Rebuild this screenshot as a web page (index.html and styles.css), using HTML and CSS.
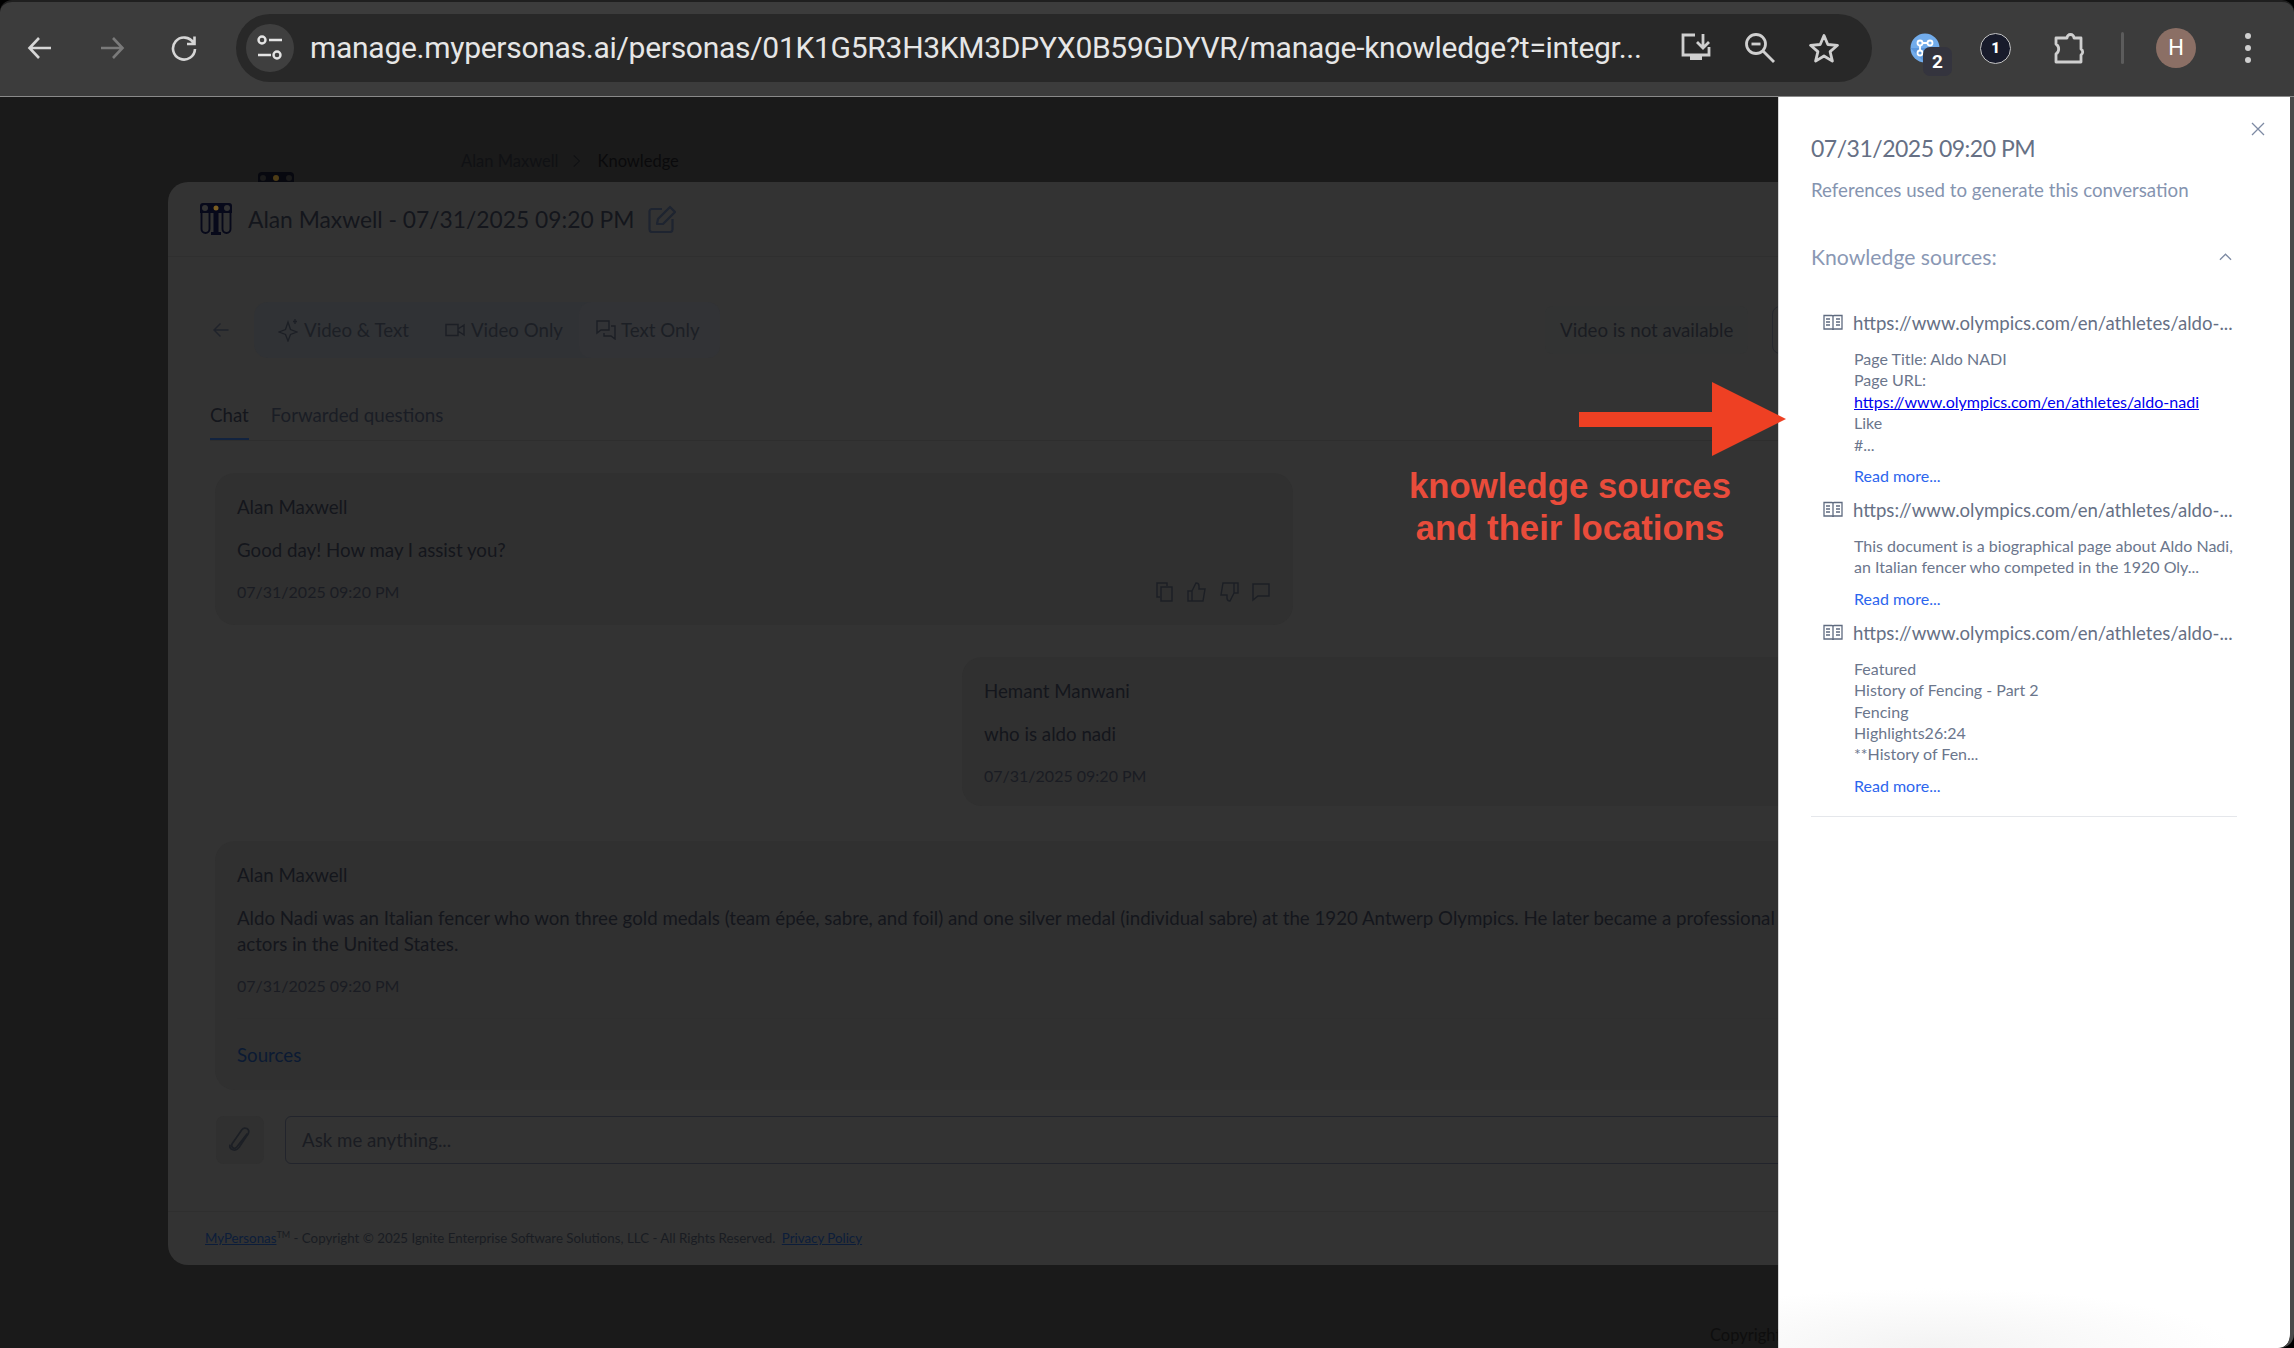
FILE: index.html
```html
<!DOCTYPE html>
<html lang="en">
<head>
<meta charset="utf-8">
<title>Knowledge sources</title>
<link rel="stylesheet" href="styles.css">
</head>
<body>
<div class="window">
  <header class="toolbar">
    <div class="nav">
      <svg class="ic" viewBox="0 0 28 28"><path d="M25 14H4M13 4 3.500 14 13 24" fill="none" stroke="#d6d6d6" stroke-width="2.600"/></svg>
      <svg class="ic" viewBox="0 0 28 28"><path d="M3 14h21M15 4l9.500 10L15 24" fill="none" stroke="#7a7a7a" stroke-width="2.600"/></svg>
      <svg class="ic" viewBox="0 0 28 28"><path d="M23.500 9A11 11 0 1 0 25 15M24.500 2.500v7.500h-7.500" fill="none" stroke="#d6d6d6" stroke-width="2.600"/></svg>
    </div>
    <div class="omnibox">
      <span class="tune">
        <svg viewBox="0 0 30 30" width="30" height="30"><g fill="none" stroke="#e3e3e3" stroke-width="2.400"><circle cx="7" cy="7" r="3.500"/><circle cx="22" cy="22" r="3.500"/><path d="M14 7h13M3 22h13"/></g></svg>
      </span>
      <span class="url">manage.mypersonas.ai/personas/01K1G5R3H3KM3DPYX0B59GDYVR/manage-knowledge?t=integr...</span>
      <span class="omni-icons">
        <svg class="ic-m" viewBox="0 0 32 32"><g fill="none" stroke="#cfcfcf" stroke-width="2.800"><path d="M15 3H3v20h26v-8"/><path d="M23 2v13M17 10l6 6 6-6"/></g><path d="M10 23h12v5H10z" fill="#cfcfcf"/></svg>
        <svg class="ic-m" viewBox="0 0 32 32"><g fill="none" stroke="#cfcfcf" stroke-width="2.800"><circle cx="12" cy="12" r="9.500"/><path d="M19 19l11 11"/><path d="M7.500 12h9"/></g></svg>
        <svg class="ic-m" viewBox="0 0 32 32"><path d="M16 3.500l3.800 9 9.700.8-7.400 6.300 2.300 9.500-8.400-5.100-8.400 5.100 2.300-9.500-7.400-6.300 9.700-.8z" fill="none" stroke="#cfcfcf" stroke-width="2.800" stroke-linejoin="round"/></svg>
      </span>
    </div>
    <div class="extensions">
      <span class="ext-a">
        <svg viewBox="0 0 30 30" width="30" height="30"><circle cx="15" cy="15" r="14.500" fill="#72aceb"/><path d="M.5 15l14.500 15 14.500-15z" fill="#5c97dc"/><g fill="none" stroke="#fff" stroke-width="1.800"><circle cx="10" cy="10" r="2.500"/><circle cx="20" cy="10" r="2.500"/><circle cx="10" cy="20" r="2.500"/><path d="M12.500 10h5M10 12.500v5"/></g></svg>
        <b class="ext-badge">2</b>
      </span>
      <span class="ext-b"><b>1</b></span>
      <svg class="ext-c" viewBox="0 0 32 32"><path d="M2 6h11a3.500 3.500 0 0 1 7 0h7v11a3.500 3.500 0 0 1 0 6v7H2v-8a6 6 0 0 0 0-10z" fill="none" stroke="#cfcfcf" stroke-width="2.800" stroke-linejoin="round"/></svg>
      <i class="ext-sep"></i>
      <span class="avatar">H</span>
      <span class="kebab"><i></i><i></i><i></i></span>
    </div>
  </header>

  <main class="stage">
    <div class="behind">
      <span>Alan Maxwell</span><svg viewBox="0 0 10 16" width="8" height="14"><path d="M1 1l7 7-7 7" fill="none" stroke="#0f1013" stroke-width="1.300"/></svg><span class="crumb-now">Knowledge</span>
    </div>
    <svg class="behind-logo" viewBox="0 0 36 10"><path d="M0 10V4a4 4 0 0 1 4-4h28a4 4 0 0 1 4 4v6z" fill="#07080f"/><circle cx="5" cy="6" r="3" fill="#1a1a1a"/><circle cx="18" cy="6" r="3" fill="#4d3c16"/><circle cx="31" cy="6" r="3" fill="#1a1a1a"/></svg>

    <section class="card">
      <div class="card-head">
        <svg class="logo" viewBox="0 0 32 32"><path d="M0 3a3 3 0 0 1 3-3h26a3 3 0 0 1 3 3v7H0z" fill="#07091a"/><circle cx="5" cy="5" r="3" fill="#333"/><circle cx="27" cy="5" r="3" fill="#333"/><circle cx="16" cy="5" r="2.500" fill="#7a5d22"/><g fill="none" stroke="#07091a" stroke-width="1.900"><path d="M1.500 8v18a4 4 0 0 0 8 0V10M30.500 8v18a4 4 0 0 1-8 0V10"/></g><path d="M13.500 9h5v20h-5zM11 29h10v3H11z" fill="#07091a"/></svg>
        <h1>Alan Maxwell - 07/31/2025 09:20 PM</h1>
        <svg class="edit" viewBox="0 0 28 28"><path d="M14 4H4a2.500 2.500 0 0 0-2.500 2.500v18A2.500 2.500 0 0 0 4 27h18a2.500 2.500 0 0 0 2.500-2.500V14" fill="none" stroke="#1e2430" stroke-width="2.200"/><path d="M9 19l1-5L22 2l5 5-12 12z" fill="none" stroke="#1e2430" stroke-width="2.200" stroke-linejoin="round"/></svg>
      </div>

      <div class="mode-row">
        <svg class="mode-back" viewBox="0 0 16 16"><path d="M15.500 8H1M7.500 1.500 1 8l6.500 6.500" fill="none" stroke="#1f232b" stroke-width="1.400"/></svg>
        <div class="modes">
          <span class="mode">
            <svg viewBox="0 0 20 24" width="20" height="24"><path d="M10 4l2.500 7.500L19 14l-6.500 2.500L10 23l-2.500-6.500L1 14l6.500-2.500zM17 1v5M15 3.500h4" fill="none" stroke="#1c1f25" stroke-width="1.300"/></svg>
            Video &amp; Text
          </span>
          <span class="mode">
            <svg viewBox="0 0 20 16" width="20" height="16"><path d="M1 2.500h12v11H1zM13 7l6-4v10l-6-4" fill="none" stroke="#1c1f25" stroke-width="1.400"/></svg>
            Video Only
          </span>
          <span class="mode mode-on">
            <svg viewBox="0 0 20 20" width="20" height="20"><path d="M1 1h12v9H5l-4 3zM15 6h4v13l-4-3H8v-3" fill="none" stroke="#1c1f25" stroke-width="1.400"/></svg>
            Text Only
          </span>
        </div>
        <span class="no-video">Video is not available</span>
        <span class="mode-box"></span>
      </div>

      <nav class="tabs">
        <a class="tab tab-on">Chat</a>
        <a class="tab">Forwarded questions</a>
      </nav>

      <div class="chat">
        <article class="bubble bubble-a">
          <p class="who">Alan Maxwell</p>
          <p class="msg">Good day! How may I assist you?</p>
          <div class="meta">
            <span class="stamp">07/31/2025 09:20 PM</span>
            <span class="tools">
              <svg viewBox="0 0 20 20" width="20" height="20"><path d="M5 15H2V1h10v3M6 5h11v14H6z" fill="none" stroke="#1c1f25" stroke-width="1.400"/></svg>
              <svg viewBox="0 0 20 20" width="20" height="20"><path d="M1 9h4v10H1zM5 9l4-8c2 0 3 1 3 3v3h6l-2 12H5" fill="none" stroke="#1c1f25" stroke-width="1.400"/></svg>
              <svg viewBox="0 0 20 20" width="20" height="20"><path d="M15 11h4V1h-4zM15 11l-4 8c-2 0-3-1-3-3v-3H2L4 1h11" fill="none" stroke="#1c1f25" stroke-width="1.400"/></svg>
              <svg viewBox="0 0 20 20" width="20" height="20"><path d="M2 2h16v12H7l-5 4z" fill="none" stroke="#1c1f25" stroke-width="1.400"/></svg>
            </span>
          </div>
        </article>

        <article class="bubble bubble-b">
          <p class="who">Hemant Manwani</p>
          <p class="msg">who is aldo nadi</p>
          <span class="stamp">07/31/2025 09:20 PM</span>
        </article>

        <article class="bubble bubble-c">
          <p class="who">Alan Maxwell</p>
          <p class="msg">Aldo Nadi was an Italian fencer who won three gold medals (team épée, sabre, and foil) and one silver medal (individual sabre) at the 1920 Antwerp Olympics. He later became a professional fencing master and taught fencing to actors in the United States.</p>
          <span class="stamp">07/31/2025 09:20 PM</span>
          <hr class="rule">
          <a class="sources">Sources</a>
        </article>
      </div>

      <div class="ask">
        <span class="attach"><svg viewBox="0 0 26 32" width="24" height="30"><path d="M21 9 9.500 23.500c-2.500 3-7 .5-5-3.500L15 5c3-4 9-1 7 4L12 24c-3.500 5-11 3-10-3" fill="none" stroke="#1c1f25" stroke-width="1.800"/></svg></span>
        <span class="ask-input">Ask me anything...</span>
      </div>

      <footer class="foot">
        <a>MyPersonas</a><sup>TM</sup> - Copyright © 2025 Ignite Enterprise Software Solutions, LLC - All Rights Reserved. <a class="policy">Privacy Policy</a>
      </footer>
    </section>

    <div class="under-copy">Copyright ©</div>

    <aside class="drawer">
      <svg class="close" viewBox="0 0 14 14"><path d="M1 1l12 12M13 1 1 13" fill="none" stroke="#7d8aa3" stroke-width="1.300"/></svg>
      <h2>07/31/2025 09:20 PM</h2>
      <p class="drawer-sub">References used to generate this conversation</p>
      <div class="ks-head">
        <span>Knowledge sources:</span>
        <svg viewBox="0 0 14 8" width="13" height="8"><path d="M1 7l6-6 6 6" fill="none" stroke="#7d8aa3" stroke-width="1.400"/></svg>
      </div>

      <div class="source">
        <div class="src-title">
          <svg class="book" viewBox="0 0 20 18"><g fill="none" stroke="#5f6b80" stroke-width="1.300"><path d="M1 1.500h8c.7 0 1 .5 1 1V16c0-.6-.4-1-1-1H1zM19 1.500h-8c-.7 0-1 .5-1 1V16c0-.6.4-1 1-1h8z"/><path d="M3 5h4M3 8h4M3 11h4M13 5h4M13 8h4M13 11h4"/></g></svg>
          <span>https://www.olympics.com/en/athletes/aldo-...</span>
        </div>
        <div class="src-body">Page Title: Aldo NADI<br>Page URL:<br><a class="src-link">https://www.olympics.com/en/athletes/aldo-nadi</a><br>Like<br>#...</div>
        <a class="more">Read more...</a>
      </div>

      <div class="source">
        <div class="src-title">
          <svg class="book" viewBox="0 0 20 18"><g fill="none" stroke="#5f6b80" stroke-width="1.300"><path d="M1 1.500h8c.7 0 1 .5 1 1V16c0-.6-.4-1-1-1H1zM19 1.500h-8c-.7 0-1 .5-1 1V16c0-.6.4-1 1-1h8z"/><path d="M3 5h4M3 8h4M3 11h4M13 5h4M13 8h4M13 11h4"/></g></svg>
          <span>https://www.olympics.com/en/athletes/aldo-...</span>
        </div>
        <div class="src-body">This document is a biographical page about Aldo Nadi, an Italian fencer who competed in the 1920 Oly...</div>
        <a class="more">Read more...</a>
      </div>

      <div class="source">
        <div class="src-title">
          <svg class="book" viewBox="0 0 20 18"><g fill="none" stroke="#5f6b80" stroke-width="1.300"><path d="M1 1.500h8c.7 0 1 .5 1 1V16c0-.6-.4-1-1-1H1zM19 1.500h-8c-.7 0-1 .5-1 1V16c0-.6.4-1 1-1h8z"/><path d="M3 5h4M3 8h4M3 11h4M13 5h4M13 8h4M13 11h4"/></g></svg>
          <span>https://www.olympics.com/en/athletes/aldo-...</span>
        </div>
        <div class="src-body">Featured<br>History of Fencing - Part 2<br>Fencing<br>Highlights26:24<br>**History of Fen...</div>
        <a class="more">Read more...</a>
      </div>

      <hr class="drawer-rule">
    </aside>

    <svg class="arrow" viewBox="0 0 207 74"><path d="M0 30h133V0l74 37-74 37V45H0z" fill="#ee4023"/></svg>
    <div class="note">knowledge sources<br>and their locations</div>
  </main>
</div>
</body>
</html>
```

FILE: styles.css
```css
* { box-sizing: border-box; }
html, body { margin: 0; height: 100%; overflow: hidden; background: #000; }
body { font-family: Lato, "Noto Sans", sans-serif; }
p, h1, h2 { margin: 0; font-weight: 400; }

.window { height: 1348px; display: flex; flex-direction: column; }

/* Browser chrome */
.toolbar {
  flex: none; height: 97px; padding-bottom: 2px; display: flex; align-items: center;
  background: #3c3c3c; border-bottom: 1px solid #8a8a8a;
  border-top: 2px solid #1f1f1f; border-radius: 12px 12px 0 0;
}
.nav { display: flex; gap: 44px; padding-left: 26px; width: 236px; flex: none; }
.ic { width: 28px; height: 28px; display: block; }
.omnibox {
  width: 1636px; height: 68px; flex: none; display: flex; align-items: center;
  background: #282828; border-radius: 34px; padding-left: 10px;
}
.tune {
  width: 48px; height: 48px; border-radius: 50%; background: #3f3f3f;
  display: flex; align-items: center; justify-content: center; flex: none;
}
.url {
  margin-left: 16px; width: 1334px; font: 30px/40px Roboto, sans-serif; letter-spacing: -.28px; color: #e6e6e6;
  white-space: nowrap; flex: none;
}
.omni-icons { display: flex; gap: 32px; margin-left: 36px; align-items: center; }
.ic-m { width: 32px; height: 32px; display: block; }
.extensions { display: flex; align-items: center; flex: 1; padding-left: 38px; position: relative; height: 68px; }
.ext-a { position: relative; width: 30px; height: 30px; display: block; margin-right: 40px; }
.ext-badge {
  position: absolute; left: 13px; top: 14px; width: 29px; height: 29px; border-radius: 7px;
  background: #34343e; color: #fff; font: 700 19px/29px Roboto, sans-serif; text-align: center;
}
.ext-b {
  width: 31px; height: 31px; border-radius: 50%; background: #181b2b; border: 1.500px solid #c4c4c4;
  color: #fff; font: 700 15px/28px Roboto, sans-serif; text-align: center; margin-right: 43px; flex: none;
}
.ext-c { width: 32px; height: 32px; flex: none; margin-right: 35px; }
.ext-sep { width: 3px; height: 32px; background: #5c5c5c; border-radius: 2px; flex: none; margin-right: 32px; }
.avatar {
  width: 40px; height: 40px; border-radius: 50%; background: #8b6f65; color: #fff;
  font: 22px/40px Roboto, sans-serif; text-align: center; flex: none; margin-right: 49px;
}
.kebab { display: flex; flex-direction: column; gap: 6px; }
.kebab i { width: 6px; height: 6px; border-radius: 50%; background: #cfcfcf; display: block; }

/* Dimmed page */
.stage {
  position: relative; flex: 1; overflow: hidden; padding: 85px 0 0 168px; background: #1a1a1a;
  border-right: 4px solid #4a4a4a; border-radius: 0 0 14px 0;
}
.behind {
  position: absolute; left: 461px; top: 52px; display: flex; align-items: center; gap: 14px;
  font-size: 16.500px; line-height: 24px; color: #101114;
}
.crumb-now { color: #0a0a0c; margin-left: 3px; }
.behind-logo { position: absolute; left: 258px; top: 75px; width: 36px; height: 10px; }
.card {
  width: 1958px; height: 1083px; background: #333; border-radius: 20px;
  display: flex; flex-direction: column; overflow: hidden; position: relative;
}
.card-head {
  height: 75px; flex: none; display: flex; align-items: center; padding-left: 32px;
  border-bottom: 1px solid #2f2f2f;
}
.logo { width: 32px; height: 32px; flex: none; }
.card-head h1 { font-size: 22.800px; color: #14161c; margin-left: 16px; white-space: nowrap; }
.edit { width: 28px; height: 28px; margin-left: 14px; flex: none; }
.mode-row { height: 64px; margin-top: 41px; display: flex; align-items: center; padding-left: 45px; flex: none; }
.mode-back { width: 16px; height: 16px; flex: none; }
.modes {
  display: flex; align-items: center; height: 56px; width: 466px; margin-left: 25px;
  background: #303235; border-radius: 14px; padding-left: 24px; flex: none;
}
.mode { display: flex; align-items: center; gap: 6px; font-size: 18.700px; color: #1c1f25; margin-right: 36px; white-space: nowrap; }
.mode-on { background: #323336; margin: 0 0 0 -20px; padding: 0 20px 0 17px; height: 56px; border-radius: 12px; gap: 5px; }
.no-video {
  margin-left: 825px; padding: 0 15px; height: 48px; line-height: 48px; background: #323333; border-radius: 8px;
  font-size: 18.700px; color: #1a1c22; white-space: nowrap; flex: none;
}
.mode-box { width: 80px; height: 48px; border: 1px solid #26282e; border-radius: 8px; margin-left: 24px; flex: none; }

.tabs {
  display: flex; gap: 22px; height: 49px; margin: 30px 0 0 42px; align-items: flex-start;
  border-bottom: 1px solid #2e2e2e; flex: none; font-size: 18.700px;
}
.tab { color: #1a1d25; height: 48px; line-height: 47px; }
.tab-on { color: #14161c; border-bottom: 2px solid #12233f; }

.chat { display: flex; flex-direction: column; padding: 32px 0 0 47px; flex: none; }
.bubble { background: #303030; border-radius: 20px; padding: 21px 22px 0; }
.who, .msg { font-size: 18.700px; line-height: 26px; color: #14161c; }
.msg { margin-top: 17px; }
.stamp { display: block; font-size: 16px; line-height: 24px; color: #1a1c23; margin-top: 17px; }
.bubble-a { width: 1078px; height: 152px; }
.meta { display: flex; justify-content: space-between; align-items: center; }
.tools { display: flex; gap: 12px; margin-top: 17px; }
.bubble-b { width: 1100px; height: 149px; margin: 32px 0 0 747px; }
.bubble-c { width: 1900px; height: 249px; margin-top: 35px; }
.rule { border: 0; border-top: 1px solid #2f2f2f; margin: 20px 0 0; }
.sources { display: block; font-size: 18.700px; line-height: 26px; color: #0b1a33; margin-top: 23px; }

.ask { display: flex; align-items: stretch; gap: 21px; padding: 26px 0 0 48px; flex: none; height: 74px; }
.attach {
  width: 48px; height: 48px; background: #303030; border-radius: 8px; flex: none;
  display: flex; align-items: center; justify-content: center;
}
.ask-input {
  width: 1800px; height: 48px; border: 1.500px solid #22242c; border-radius: 6px;
  padding-left: 16px; font-size: 18.700px; line-height: 46px; color: #1a1c22;
}
.foot {
  margin-top: auto; height: 54px; border-top: 1px solid #2f2f2f; padding-left: 37px;
  font-size: 13.300px; line-height: 52px; color: #191c22; white-space: nowrap;
}
.foot a { color: #0c1d3a; text-decoration: underline; }
.foot sup { font-size: 9px; line-height: 0; }
.policy { margin-left: 3px; }
.under-copy { position: absolute; left: 1710px; bottom: 1px; font-size: 16.500px; line-height: 24px; color: #0e0e0e; white-space: nowrap; }

/* Drawer */
.drawer {
  position: absolute; left: 1778px; top: 0; bottom: 0; width: 512px;
  background: radial-gradient(ellipse 300px 60px at 30% 100%, #f3f3f3, #fff 100%);
  border-left: 1px solid #d4d4d4; border-radius: 0 0 12px 0; padding: 0 53px 0 32px;
}
.close { position: absolute; left: 472px; top: 25px; width: 14px; height: 14px; }
.drawer h2 { font-size: 23px; letter-spacing: -.5px; line-height: 32px; color: #667085; margin-top: 35px; white-space: nowrap; }
.drawer-sub { font-size: 18.700px; line-height: 26px; color: #8594b0; margin-top: 13px; white-space: nowrap; }
.ks-head {
  display: flex; justify-content: space-between; align-items: center; margin-top: 40px;
  font-size: 21.200px; line-height: 28px; color: #8a98b4; padding-right: 5px; height: 28px;
}
.ks-head + .source { margin-top: 39px; }
.src-title { display: flex; align-items: center; height: 26px; padding-left: 12px; gap: 10px; }
.book { width: 20px; height: 18px; flex: none; }
.src-title span { font-size: 18.600px; line-height: 26px; color: #667085; white-space: nowrap; flex: none; }
.src-body { margin: 12px 0 0 43px; font-size: 16px; line-height: 21.400px; color: #6b768c; width: 385px; }
.src-link { color: #0000ee; text-decoration: underline; }
.more { display: block; margin: 10px 0 11px 43px; font-size: 16px; line-height: 21px; color: #2c66ee; }
.drawer-rule { border: 0; border-top: 1.500px solid #e5e7eb; margin: 20px 0 0; }

/* Annotation */
.arrow { position: absolute; left: 1579px; top: 285px; width: 207px; height: 74px; }
.note {
  position: absolute; left: 1320px; top: 368px; width: 500px; text-align: center;
  font: 700 34.700px/42px "Liberation Sans", Arial, sans-serif; color: #e94c3b;
}
```
